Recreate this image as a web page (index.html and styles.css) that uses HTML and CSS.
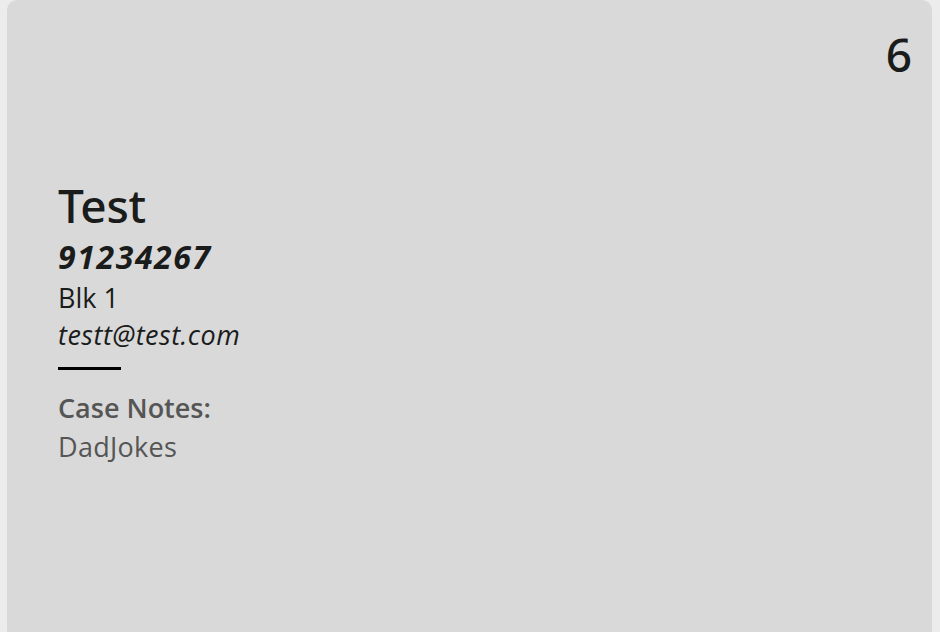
FILE: index.html
```html
<!DOCTYPE html>
<html>
<head>
<meta charset="utf-8">
<link rel="stylesheet" href="styles.css">
</head>
<body>
<div class="card">
  <div class="index">6</div>
  <div class="details">
    <div class="name">Test</div>
    <div class="phone">91234267</div>
    <div class="address">Blk 1</div>
    <div class="email">testt@test.com</div>
    <div class="divider"></div>
    <div class="notes-label">Case Notes:</div>
    <div class="notes">DadJokes</div>
  </div>
</div>
</body>
</html>
```
FILE: styles.css
```css
html, body {
  margin: 0;
  padding: 0;
  background: #ececec;
  height: 632px;
  overflow: hidden;
}
body {
  font-family: "Open Sans", "Noto Sans", sans-serif;
  color: #1a1c1b;
}
.card {
  margin-left: 7px;
  width: 925px;
  height: 640px;
  background: #d9d9d9;
  border-radius: 10px;
  position: relative;
  box-sizing: border-box;
  padding: 176px 0 0 51px;
}
.index {
  position: absolute;
  top: 22px;
  right: 20px;
  font-family: "Noto Sans", "Open Sans", sans-serif;
  font-size: 46px;
  line-height: 64px;
  font-weight: 500;
}
.details {
  display: flex;
  flex-direction: column;
  align-items: flex-start;
}
.name {
  font-family: "Noto Sans", "Open Sans", sans-serif;
  font-size: 46px;
  line-height: 58px;
  font-weight: 500;
  letter-spacing: -0.3px;
}
.phone {
  font-size: 32px;
  line-height: 45px;
  font-weight: 700;
  font-style: italic;
  letter-spacing: 1.6px;
}
.address {
  font-size: 27px;
  line-height: 38px;
}
.email {
  font-size: 27px;
  line-height: 36px;
  font-style: italic;
  letter-spacing: 0.5px;
}
.divider {
  width: 63px;
  height: 3px;
  background: #000;
  margin: 14px 0 19px;
}
.notes-label {
  font-size: 27px;
  line-height: 38px;
  font-weight: 600;
  color: #555;
}
.notes {
  font-size: 27px;
  line-height: 40px;
  color: #555;
  letter-spacing: 0.3px;
}
```
